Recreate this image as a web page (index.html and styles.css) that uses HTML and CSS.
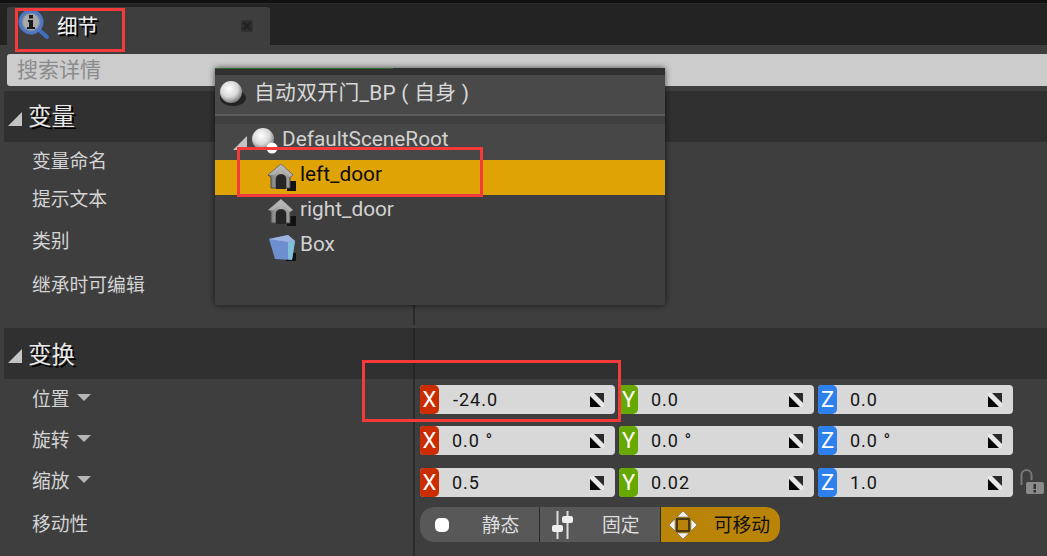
FILE: index.html
```html
<!DOCTYPE html>
<html lang="zh">
<head>
<meta charset="utf-8">
<title>细节</title>
<link rel="stylesheet" href="styles.css">
</head>
<body>
<svg class="defs" width="0" height="0" aria-hidden="true">
  <defs>
    <radialGradient id="ball" cx="0.42" cy="0.35" r="0.7">
      <stop offset="0" stop-color="#fff"/><stop offset="0.55" stop-color="#d8d8d8"/><stop offset="1" stop-color="#6a6a6a"/>
    </radialGradient>
    <linearGradient id="housefill" x1="0" y1="0" x2="1" y2="0">
      <stop offset="0" stop-color="#6e6e6e"/><stop offset="0.5" stop-color="#b4b4b4"/><stop offset="1" stop-color="#8c8c8c"/>
    </linearGradient>
    <symbol id="spin" viewBox="0 0 16 16">
      <rect x="1" y="1" width="14" height="14" fill="#e8e8e8"/>
      <path d="M1 4V15H12Z" fill="#050505"/>
      <path d="M15 11V1H5Z" fill="#2a2a2a"/>
    </symbol>
    <symbol id="house" viewBox="0 0 28 28">
      <rect x="19" y="18" width="9" height="10" fill="#111"/>
      <path d="M13 1 25 12l-3 2v11h-4V16c0-3-2-4.500-5-4.500S8 13 8 16v9H3V14l-3-2Z" fill="url(#housefill)" stroke="#4c4c4c" stroke-width="1"/>
      <path d="M13 1 25 12l-3 2-9-8-7 6-6 0Z" fill="#b8b8b8" opacity="0.8"/>
      <path d="M8 16c0-3 2-4.500 5-4.500s5 1.500 5 4.500v10H8Z" fill="#262626"/>
    </symbol>
  </defs>
</svg>

<div class="topbar"></div>
<div class="tabbar">
  <div class="tab">
    <svg class="tab-icon" width="32" height="32" viewBox="0 0 32 32">
      <path d="M20 20 29 28" stroke="#3e6fc0" stroke-width="4" stroke-linecap="round"/>
      <circle cx="13" cy="13" r="11" fill="#7a8ba8" stroke="#4d77c4" stroke-width="3"/>
      <circle cx="13" cy="13" r="8" fill="#a9a9a9"/>
      <rect x="11" y="6" width="4" height="3.500" fill="#1b1b1b"/>
      <path d="M10 11h5v7h2v2H9v-2h2v-5h-1Z" fill="#1b1b1b"/>
    </svg>
    <span class="tab-title">细节</span>
    <svg class="tab-close" width="12" height="12" viewBox="0 0 12 12">
      <rect width="12" height="12" rx="2" fill="#303030"/>
      <path d="M2.500 2.500 9.500 9.500M9.500 2.500 2.500 9.500" stroke="#232323" stroke-width="2.500"/>
    </svg>
  </div>
</div>

<main class="panel">
  <div class="search">搜索详情</div>

  <section class="section-head head-var">
    <span class="caret"></span><span class="section-title">变量</span>
  </section>
  <div class="rows rows-var">
    <div class="row row-a"><span class="label">变量命名</span></div>
    <div class="row row-b"><span class="label">提示文本</span></div>
    <div class="row row-c"><span class="label">类别</span></div>
    <div class="row row-d"><span class="label">继承时可编辑</span></div>
  </div>

  <section class="section-head head-trans">
    <span class="caret"></span><span class="section-title">变换</span>
  </section>
  <div class="rows rows-trans">
    <div class="row vec-row first">
      <span class="label">位置<i class="drop"></i></span>
      <div class="vec">
        <div class="field"><b class="axis x">X</b><span class="val indent">-24.0</span><svg class="spin"><use href="#spin"/></svg></div>
        <div class="field"><b class="axis y">Y</b><span class="val">0.0</span><svg class="spin"><use href="#spin"/></svg></div>
        <div class="field"><b class="axis z">Z</b><span class="val">0.0</span><svg class="spin"><use href="#spin"/></svg></div>
      </div>
    </div>
    <div class="row vec-row second">
      <span class="label">旋转<i class="drop"></i></span>
      <div class="vec">
        <div class="field"><b class="axis x">X</b><span class="val">0.0 °</span><svg class="spin"><use href="#spin"/></svg></div>
        <div class="field"><b class="axis y">Y</b><span class="val">0.0 °</span><svg class="spin"><use href="#spin"/></svg></div>
        <div class="field"><b class="axis z">Z</b><span class="val">0.0 °</span><svg class="spin"><use href="#spin"/></svg></div>
      </div>
    </div>
    <div class="row vec-row third">
      <span class="label">缩放<i class="drop"></i></span>
      <div class="vec">
        <div class="field"><b class="axis x">X</b><span class="val">0.5</span><svg class="spin"><use href="#spin"/></svg></div>
        <div class="field"><b class="axis y">Y</b><span class="val">0.02</span><svg class="spin"><use href="#spin"/></svg></div>
        <div class="field"><b class="axis z">Z</b><span class="val">1.0</span><svg class="spin"><use href="#spin"/></svg></div>
        <svg class="lock" width="26" height="28" viewBox="0 0 26 28">
          <path d="M2.500 17V7a5 5 0 0 1 10 0v5" fill="none" stroke="#777" stroke-width="2"/>
          <rect x="7" y="14" width="18" height="12" rx="2" fill="#8a8a8a"/>
          <rect x="14.500" y="16" width="2.500" height="5" fill="#333"/>
          <rect x="14.500" y="22" width="2.500" height="2.500" fill="#333"/>
        </svg>
      </div>
    </div>
    <div class="row mob-row">
      <span class="label">移动性</span>
      <div class="mobility">
        <div class="seg">
          <svg class="seg-icon" width="24" height="24" viewBox="0 0 24 24"><rect x="5" y="5" width="14" height="14" rx="5" fill="#fff"/></svg>
          <span class="seg-text">静态</span>
        </div>
        <div class="seg">
          <svg class="seg-icon" width="24" height="30" viewBox="0 0 24 30">
            <rect x="6.500" y="1" width="2" height="28" fill="#ddd"/>
            <rect x="16.500" y="1" width="2" height="28" fill="#ddd"/>
            <rect x="2" y="15" width="11" height="7" rx="2" fill="#eee"/>
            <rect x="12" y="6" width="11" height="7" rx="2" fill="#eee"/>
          </svg>
          <span class="seg-text">固定</span>
        </div>
        <div class="seg active">
          <svg class="seg-icon" width="28" height="28" viewBox="0 0 28 28">
            <path d="M14 0 20 6H8ZM14 28 8 22H20ZM0 14 6 8V20ZM28 14 22 20V8Z" fill="#f2f2f2" stroke="#555" stroke-width="0.500"/>
            <rect x="8" y="8" width="12" height="12" fill="#b9830a" stroke="#4a3a10" stroke-width="2"/>
          </svg>
          <span class="seg-text">可移动</span>
        </div>
      </div>
    </div>
  </div>
</main>

<aside class="popup">
  <div class="popup-title">
    <svg class="ball" width="28" height="28" viewBox="0 0 28 28">
      <ellipse cx="15" cy="19" rx="13" ry="8" fill="#222"/>
      <circle cx="13" cy="13" r="11" fill="url(#ball)"/>
    </svg>
    <span class="title-text">自动双开门_BP ( 自身 )</span>
  </div>
  <div class="popup-sep"></div>
  <div class="tree-root">
    <span class="caret small"></span>
    <svg class="root-icon" width="28" height="28" viewBox="0 0 28 28">
      <circle cx="12" cy="12" r="11" fill="url(#ball)"/>
      <circle cx="21" cy="21" r="5.500" fill="#fff"/>
    </svg>
    <span class="tree-text root-text">DefaultSceneRoot</span>
  </div>
  <div class="tree-item selected">
    <svg class="house" width="28" height="28"><use href="#house"/></svg>
    <span class="tree-text">left_door</span>
  </div>
  <div class="tree-item">
    <svg class="house" width="28" height="28"><use href="#house"/></svg>
    <span class="tree-text">right_door</span>
  </div>
  <div class="tree-item">
    <svg class="house" width="28" height="28" viewBox="0 0 28 28">
      <rect x="18" y="20" width="10" height="8" fill="#111"/>
      <path d="M1 6 20 2 27 8 24 27 7 26Z" fill="#6d8fd0"/>
      <path d="M20 9 27 8 24 27 20 26Z" fill="#7fc0d8"/>
      <path d="M1 6 20 2 27 8 20 9Z" fill="#9db4e0"/>
    </svg>
    <span class="tree-text">Box</span>
  </div>
</aside>

<div class="mark mark-tab"></div>
<div class="mark mark-door"></div>
<div class="mark mark-x"></div>
</body>
</html>
```

FILE: styles.css
```css
* { box-sizing: border-box; }

html, body {
  margin: 0;
  width: 1047px;
  height: 556px;
  overflow: hidden;
}

body {
  position: relative;
  background: #232323;
  color: #d6d6d6;
  font-family: Roboto, "Noto Sans CJK SC", sans-serif;
}

.defs { position: absolute; }

.topbar {
  height: 4px;
  background: #111;
  border-bottom: 1px solid #2a2a2a;
}

.tabbar {
  height: 41px;
  padding: 3px 0 0 7px;
  background: #232323;
}

.tab {
  width: 263px;
  height: 38px;
  display: flex;
  align-items: center;
  background: #3e3e3e;
  border-radius: 3px 3px 0 0;
  padding-left: 11px;
}

.tab-icon { flex: none; margin-top: -3px; }

.tab-title {
  margin-left: 7px;
  margin-top: -3px;
  font-size: 20.500px;
  color: #f2f2f2;
  text-shadow: 2px 2px 0 #000;
}

.tab-close {
  margin-left: auto;
  margin-right: 17px;
  margin-top: -1px;
}

.panel {
  height: 511px;
  background: #3e3e3e;
  padding-top: 9px;
}

.search {
  height: 32px;
  margin-left: 7px;
  padding-left: 10px;
  background: #cccccc;
  border-radius: 3px 0 0 3px;
  color: #8b8b8b;
  font-size: 21px;
  line-height: 32px;
}

.section-head {
  display: flex;
  align-items: center;
  margin-left: 4px;
  padding-left: 4px;
  background:
    linear-gradient(#262626, #262626) 409px 0 / 2px 100% no-repeat,
    #303030;
  border-radius: 2px 0 0 0;
}

.head-var { height: 51px; margin-top: 5px; }
.head-trans { height: 51px; }

.caret {
  width: 0;
  height: 0;
  margin-top: 4px;
  border-left: 14px solid transparent;
  border-bottom: 14px solid #c4c4c4;
}

.caret.small {
  margin: 0 0 0 18px;
  flex: none;
}

.section-title {
  margin-left: 6px;
  margin-top: -3px;
  font-size: 23.500px;
  color: #e8e8e8;
  text-shadow: 2px 2px 0 #000;
}

.head-trans .section-title { margin-top: -2px; }

.rows {
  margin-left: 4px;
  padding-left: 28px;
}

.rows-var {
  height: 186px;
  background: linear-gradient(#2b2b2b, #2b2b2b) 409px 0 / 2px 183px no-repeat;
}

.rows-trans {
  height: 177px;
  padding-top: 6px;
  background: linear-gradient(#2b2b2b, #2b2b2b) 409px 0 / 2px 100% no-repeat;
}

.row {
  display: flex;
  align-items: center;
  font-size: 18.800px;
}

.label {
  display: flex;
  align-items: center;
  width: 388px;
  flex: none;
  color: #d4d4d4;
}

.row-a { height: 34px; }
.row-b { height: 42px; }
.row-c { height: 42px; }
.row-d { height: 46px; }

.drop {
  width: 0;
  height: 0;
  margin-left: 7px;
  border-left: 7px solid transparent;
  border-right: 7px solid transparent;
  border-top: 7px solid #b5b5b5;
}

.vec-row { height: 29px; }
.vec-row.second { margin-top: 12px; }
.vec-row.third { margin-top: 13px; }

.vec-row .label { margin-top: -5px; }
.vec-row.third .label { margin-top: -7px; }
.mob-row .label { margin-top: -4px; }

.vec {
  display: flex;
  gap: 4px;
}

.field {
  width: 195px;
  height: 29px;
  display: flex;
  align-items: center;
  background: #d8d8d8;
  border-radius: 4px;
  overflow: hidden;
  color: #141414;
  font-size: 18px;
  letter-spacing: 1px;
}

.axis {
  width: 19px;
  height: 100%;
  flex: none;
  text-align: center;
  font-weight: 400;
  font-size: 22px;
  line-height: 29px;
  letter-spacing: 0;
  color: #fff;
  border-radius: 0 5px 5px 0;
}

.x { background: #cb2d00; }
.y { background: #67a800; }
.z { background: #2e80ed; }

.val { margin-left: 13px; }
.val.indent { margin-left: 14px; }

.third .val { margin-top: -1px; }

.spin {
  width: 16px;
  height: 16px;
  margin-left: auto;
  margin-right: 10px;
}

.lock { flex: none; margin: -2px 0 0 2px; align-self: center; }

.mob-row { height: 35px; margin-top: 10px; }

.mobility {
  display: flex;
  width: 360px;
  height: 35px;
  border-radius: 14px;
  overflow: hidden;
  background: #2c2c2c;
  gap: 1px;
}

.seg {
  position: relative;
  flex: 1;
  display: flex;
  align-items: center;
  background: #585858;
  font-size: 18.800px;
  color: #dedede;
}

.seg-icon { flex: none; margin-left: 10px; }
.seg.active .seg-icon { margin-left: 8px; }
.seg-text { position: absolute; right: 20px; margin-top: -3px; }
.seg.active { background: #b98408; color: #111; }
.seg.active .seg-text { right: 10px; }

.popup {
  position: absolute;
  left: 215px;
  top: 68px;
  width: 450px;
  height: 237px;
  background: #3e3e3e;
  border-radius: 0 0 3px 3px;
  box-shadow: 0 0 6px rgba(0,0,0,0.65);
  font-size: 20.800px;
  color: #d2d2d2;
}

.popup::before {
  content: "";
  display: block;
  height: 7px;
  background: linear-gradient(90deg, #2f6a2f 0, #2f6a2f 178px, #303030 178px) 0 0 / 100% 1px no-repeat, #303030;
}

.popup-title {
  height: 39px;
  display: flex;
  align-items: center;
  gap: 8px;
  padding-left: 3px;
  background: #494949;
  color: #d8d8d8;
}

.ball { margin-top: -4px; flex: none; }
.title-text { margin-top: -7px; letter-spacing: 0.300px; white-space: pre; }

.popup-sep {
  height: 10px;
  background: #3f3f3f;
  border-top: 2px solid #5c5c5c;
}

.tree-root {
  height: 36px;
  display: flex;
  align-items: center;
  background: #474747;
  padding-top: 2px;
}

.root-icon { flex: none; margin-left: 4px; margin-top: -5px; margin-right: 3px; }

.tree-text { margin-top: -7px; }
.root-text { margin-top: -9px; }

.tree-item {
  height: 35px;
  display: flex;
  align-items: center;
  gap: 4px;
  padding-left: 55px;
}

.selected { background: #dfa305; color: #0c0c0c; }

.house { flex: none; margin-left: -2px; margin-top: -2px; }

.mark {
  position: absolute;
  border: 3px solid #f43a3a;
  pointer-events: none;
}

.mark-tab { left: 15px; top: 8px; width: 110px; height: 44px; }
.mark-door { left: 237px; top: 147px; width: 246px; height: 50px; }
.mark-x { left: 362px; top: 360px; width: 259px; height: 62px; }
```
